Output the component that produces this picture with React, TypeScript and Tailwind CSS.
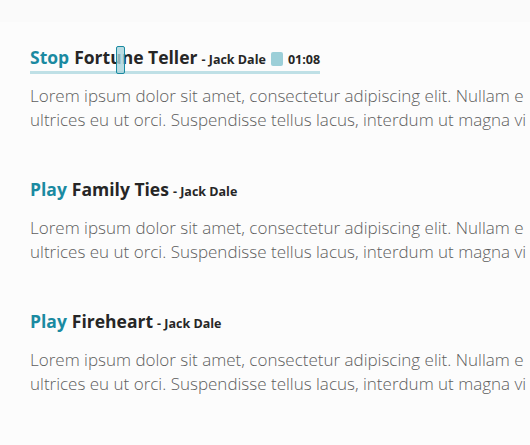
import React from "react";

interface Track {
  id: number;
  title: string;
  artist: string;
  playing: boolean;
  time?: string;
}

const tracks: Track[] = [
  { id: 1, title: "Fortune Teller", artist: "Jack Dale", playing: true, time: "01:08" },
  { id: 2, title: "Family Ties", artist: "Jack Dale", playing: false },
  { id: 3, title: "Fireheart", artist: "Jack Dale", playing: false },
];

const heading = { fontFamily: "'Open Sans', 'DejaVu Sans', sans-serif" };
const body = { fontFamily: "'Open Sans', 'Noto Sans', sans-serif" };

export default function App() {
  return (
    <main className="min-h-[445px] w-[530px] overflow-hidden bg-[#fcfcfc]">
      <div className="h-[22px] bg-[#fafafa]" />
      <div className="px-[30px] pt-[24px]">
        {tracks.map((track) => (
          <section key={track.id} className="mb-[46px]">
            {/* title row, the playing one gets the progress bar */}
            <div
              className={
                "relative inline-flex items-baseline leading-[22px] border-b-[3px] " +
                (track.playing ? "border-[#bfe0e6]" : "border-transparent")
              }
              style={heading}
            >
              <span className="text-[17.5px] font-bold text-[#1a8aa1]">
                {track.playing ? "Stop" : "Play"}
              </span>
              <span className="ml-[5px] text-[17.5px] font-bold text-[#262626]">{track.title}</span>
              <span className="ml-[4px] text-[12.5px] font-bold text-[#262626]">- {track.artist}</span>
              {track.playing && (
                <>
                  <span className="ml-[5px] inline-block h-[14px] w-[12px] self-center rounded-[2px] bg-[#9ccfd8]" />
                  <span className="ml-[5px] text-[12.5px] font-bold text-[#262626]">{track.time}</span>
                  <span className="absolute left-[86px] top-0 h-[28px] w-[9px] rounded-[2px] border border-[#1a8aa1] bg-[#a9d3db]/80" />
                </>
              )}
            </div>
            <p className="mt-[10px] whitespace-nowrap text-[17px] font-light leading-[24px] text-[#5e5e5e]" style={body}>
              Lorem ipsum dolor sit amet, consectetur adipiscing elit. Nullam e
              <br />
              ultrices eu ut orci. Suspendisse tellus lacus, interdum ut magna vi
            </p>
          </section>
        ))}
      </div>
    </main>
  );
}
